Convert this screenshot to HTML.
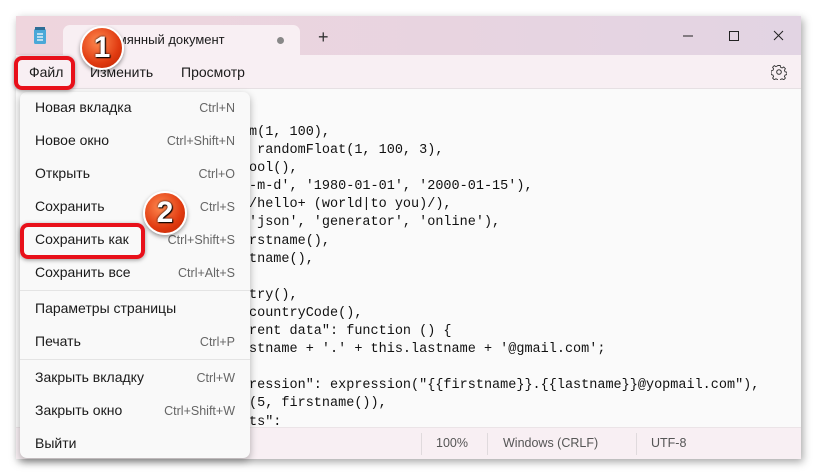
<!DOCTYPE html>
<html><head><meta charset="utf-8"><style>
*{margin:0;padding:0;box-sizing:border-box}
body{width:817px;height:475px;background:#fff;position:relative;overflow:hidden;font-family:"Segoe UI","Liberation Sans","Noto Sans CJK SC",sans-serif;color:#1a1a1a}
.win{position:absolute;left:16px;top:16px;width:785px;height:443px;background:#fafafa;box-shadow:2px 3px 8px rgba(0,0,0,.35);overflow:hidden}
.title{position:absolute;left:0;top:0;width:785px;height:39px;background:linear-gradient(90deg,#efd5dd,#e2d4e3)}
.tab{position:absolute;left:47px;top:9px;width:237px;height:30px;background:#f8eff3;border-radius:7px 7px 0 0}
.menubar{position:absolute;left:0;top:39px;width:785px;height:34px;background:#f8eff3;border-bottom:1px solid #e6e0e3}
.mb{position:absolute;top:64px;font-size:14px}
.code{position:absolute;left:233px;top:108px;font-family:"Liberation Mono",monospace;font-size:13.5px;line-height:18.1px;white-space:pre;color:#111}
.status{position:absolute;left:0;top:411px;width:785px;height:32px;background:#f8eff3;border-top:1px solid #ebe4e7;font-size:12.5px;color:#555}
.status span{position:absolute;top:8px}
.sep{position:absolute;top:5px;width:1px;height:22px;background:#e0dadd}
.menu{position:absolute;left:20px;top:92px;width:230px;height:366px;background:#f9f9f9;border-radius:7px;box-shadow:0 3px 8px rgba(0,0,0,.3)}
.mi{position:absolute;left:15px;font-size:14px;color:#1a1a1a}
.sc{position:absolute;right:15px;font-size:12.5px;color:#666}
.msep{position:absolute;left:0;width:230px;height:1px;background:#e4e4e4}
.badge{position:absolute;width:44px;height:44px;border-radius:50%;background:radial-gradient(circle at 40% 35%,#ff8a50,#e03a10 60%,#b82000);border:2px solid #fff;box-shadow:0 2px 4px rgba(0,0,0,.4);color:#fff;font:bold 30px "Liberation Sans",sans-serif;text-align:center;line-height:40px;text-shadow:0 0 2px #000,1px 1px 1px #000}
.hl{position:absolute;border:4px solid #e8101a;border-radius:8px;box-shadow:0 1px 4px rgba(0,0,0,.4)}
</style></head><body>
<div class="win">
<div class="title"></div>
<div class="tab"></div>
<svg style="position:absolute;left:16px;top:11px" width="16" height="18"><rect x="2" y="2" width="12" height="15" rx="1.5" fill="#4aa8d8"/><rect x="3" y="0" width="10" height="3" fill="#2d6f97"/><path d="M5 7h6M5 10h6M5 13h6" stroke="#fff" stroke-width="1.2"/></svg>
<div style="position:absolute;left:71px;top:16px;font-size:13px">Безымянный документ</div>
<div style="position:absolute;left:261px;top:21px;width:7px;height:7px;border-radius:50%;background:#888"></div>
<div style="position:absolute;left:302px;top:11px;font-size:18px;color:#333">+</div>
<svg style="position:absolute;left:665px;top:7px" width="120" height="30"><path d="M2 13h10" stroke="#222"/><path d="M48.5 8.5h9v9h-9z" stroke="#222" fill="none"/><path d="M93 8l9 9M102 8l-9 9" stroke="#222"/></svg>
<div class="menubar"></div>
<svg style="position:absolute;left:755px;top:48px" width="16" height="16" viewBox="0 0 16 16"><circle cx="8" cy="8" r="2.3" fill="none" stroke="#333"/><path d="M6.8 1.5h2.4l.4 1.8 1.5.7 1.6-1 1.7 1.7-1 1.6.7 1.5 1.8.4v2.4l-1.8.4-.7 1.5 1 1.6-1.7 1.7-1.6-1-1.5.7-.4 1.8H6.8l-.4-1.8-1.5-.7-1.6 1-1.7-1.7 1-1.6-.7-1.5-1.8-.4V6.8l1.8-.4.7-1.5-1-1.6 1.7-1.7 1.6 1 1.5-.7z" fill="none" stroke="#333" stroke-width=".9"/></svg>
<div class="code">m(1, 100),
 randomFloat(1, 100, 3),
ool(),
-m-d', '1980-01-01', '2000-01-15'),
/hello+ (world|to you)/),
'json', 'generator', 'online'),
rstname(),
tname(),

try(),
countryCode(),
rent data": function () {
stname + '.' + this.lastname + '@gmail.com';

ression": expression("{{firstname}}.{{lastname}}@yopmail.com"),
(5, firstname()),
ts":</div>
<div class="status">
<div class="sep" style="left:405px"></div><span style="left:420px">100%</span>
<div class="sep" style="left:471px"></div><span style="left:487px">Windows (CRLF)</span>
<div class="sep" style="left:620px"></div><span style="left:635px">UTF-8</span>
</div>
</div>
<div class="mb" style="left:29px">Файл</div>
<div class="mb" style="left:90px">Изменить</div>
<div class="mb" style="left:181px">Просмотр</div>
<div class="menu">
<div class="mi" style="top:7px">Новая вкладка</div><div class="sc" style="top:9px">Ctrl+N</div>
<div class="mi" style="top:40px">Новое окно</div><div class="sc" style="top:42px">Ctrl+Shift+N</div>
<div class="mi" style="top:73px">Открыть</div><div class="sc" style="top:75px">Ctrl+O</div>
<div class="mi" style="top:106px">Сохранить</div><div class="sc" style="top:108px">Ctrl+S</div>
<div class="mi" style="top:139px">Сохранить как</div><div class="sc" style="top:141px">Ctrl+Shift+S</div>
<div class="mi" style="top:172px">Сохранить все</div><div class="sc" style="top:174px">Ctrl+Alt+S</div>
<div class="msep" style="top:198px"></div>
<div class="mi" style="top:208px">Параметры страницы</div>
<div class="mi" style="top:241px">Печать</div><div class="sc" style="top:243px">Ctrl+P</div>
<div class="msep" style="top:267px"></div>
<div class="mi" style="top:277px">Закрыть вкладку</div><div class="sc" style="top:279px">Ctrl+W</div>
<div class="mi" style="top:310px">Закрыть окно</div><div class="sc" style="top:312px">Ctrl+Shift+W</div>
<div class="mi" style="top:343px">Выйти</div>
</div>
<div class="hl" style="left:14px;top:56px;width:61px;height:34px"></div>
<div class="hl" style="left:20px;top:223px;width:125px;height:36px"></div>
<div class="badge" style="left:80px;top:26px">1</div>
<div class="badge" style="left:143px;top:191px">2</div>
</body></html>
